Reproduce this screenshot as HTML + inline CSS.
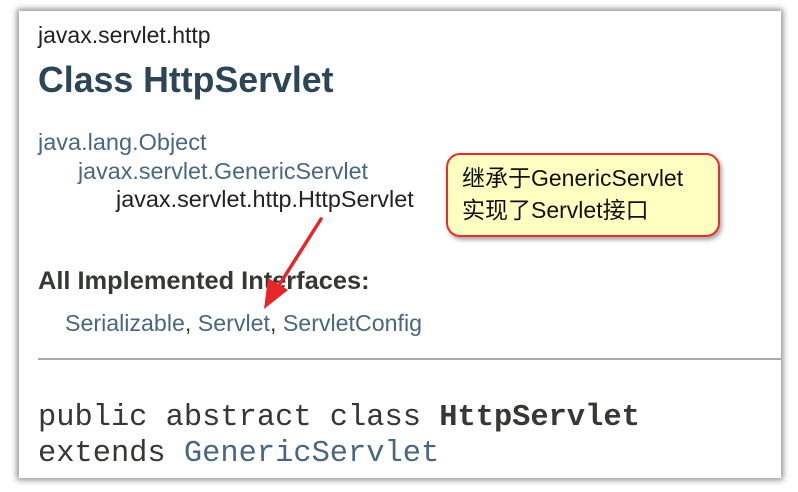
<!DOCTYPE html>
<html><head><meta charset="utf-8"><style>
html,body{margin:0;padding:0;width:798px;height:492px;background:#fff;overflow:hidden;position:relative}
.card{position:absolute;left:19px;top:11px;width:762px;height:467px;background:#fff;box-shadow:0 0 6px 2px rgba(0,0,0,.45)}
.t{position:absolute;white-space:nowrap;font-family:"Liberation Sans",sans-serif}
.m{font-family:"Liberation Mono",monospace}
.link{color:#4a6782}
</style></head><body>
<div class="card"></div>
<div class="t" style="left:38px;top:22px;font-size:23px;color:#222">javax.servlet.http</div>
<div class="t" style="left:38px;top:60px;font-size:35.7px;font-weight:bold;color:#2c4557">Class HttpServlet</div>
<div class="t link" style="left:38px;top:129px;font-size:23.5px">java.lang.Object</div>
<div class="t link" style="left:78px;top:158px;font-size:23.3px">javax.servlet.GenericServlet</div>
<div class="t" style="left:116px;top:186px;font-size:23.4px;color:#222">javax.servlet.http.HttpServlet</div>
<div class="t" style="left:38px;top:267px;font-size:25.4px;font-weight:bold;color:#353833">All Implemented Interfaces:</div>
<div class="t" style="left:65px;top:310px;font-size:23.2px;color:#353833"><span class="link">Serializable</span>, <span class="link">Servlet</span>, <span class="link">ServletConfig</span></div>
<div style="position:absolute;left:38px;top:358px;width:743px;height:2px;background:#aaa"></div>
<div class="t m" style="left:38px;top:401px;font-size:30.4px;color:#353833">public abstract class <b>HttpServlet</b></div>
<div class="t m" style="left:38px;top:437px;font-size:30.4px;color:#353833">extends <span class="link">GenericServlet</span></div>
<div style="position:absolute;left:446px;top:153px;width:270px;height:80px;border:2px solid #f02a2a;border-radius:14px;background:#ffffc2;box-shadow:2px 3px 4px rgba(0,0,0,.35)"></div>
<div class="t" style="left:462px;top:162px;font-size:23px;line-height:32px;color:#111;font-family:'Liberation Sans','Noto Sans CJK SC',sans-serif">继承于GenericServlet<br>实现了Servlet接口</div>
<svg style="position:absolute;left:0;top:0" width="798" height="492">
<line x1="321" y1="219" x2="276" y2="290" stroke="#e8262a" stroke-width="3.5" stroke-linecap="round"/>
<polygon points="264,309 268,278 288,290" fill="#e8262a"/>
</svg>
</body></html>
